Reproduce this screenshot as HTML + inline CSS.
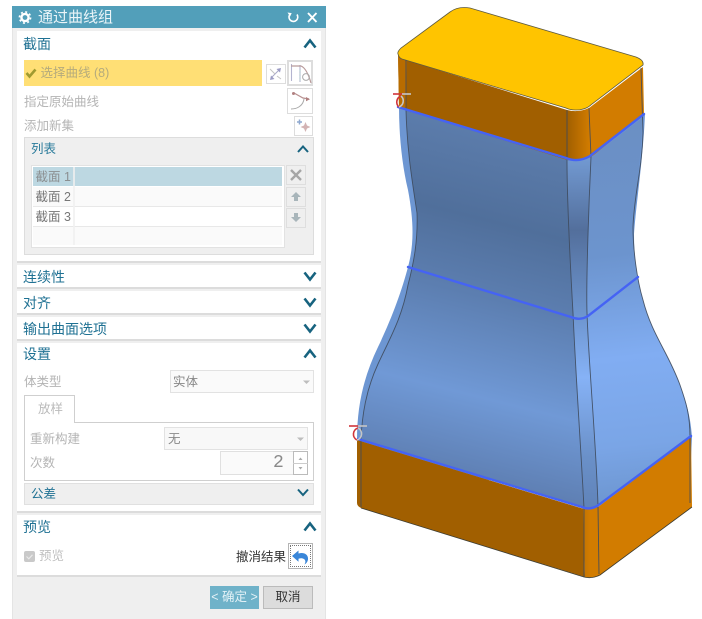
<!DOCTYPE html>
<html><head><meta charset="utf-8">
<style>
html,body{margin:0;padding:0;background:#fff}
#r{position:relative;width:702px;height:619px;overflow:hidden;background:#fff;font-family:"Liberation Sans","Noto Sans CJK SC",sans-serif;filter:blur(.3px)}
.a{position:absolute;box-sizing:border-box}
.t{position:absolute;white-space:nowrap;line-height:18px;height:18px}
.h{font-size:14px;color:#1f7193;left:23px}
.g{font-size:12.5px;color:#b4b4b4}
.d{font-size:12.5px;color:#777}
.w{background:#fff;left:17px;width:304px;border-bottom:2px solid #dcdcdc}
.b{background:#fff;border:1px solid #ddd}
svg{position:absolute;overflow:visible}
</style></head><body><div id="r">

<div class="a" style="left:12px;top:6px;width:314px;height:613px;background:#efefef;border-left:1px solid #e4e4e4;border-right:1px solid #e4e4e4"></div>
<div class="a" style="left:12px;top:6px;width:314px;height:22px;background:#529fba"></div>
<svg style="left:0;top:0" width="330" height="30" viewBox="0 0 330 30">
<circle cx="25" cy="17.5" r="3.6" fill="none" stroke="#fff" stroke-width="2.4"/>
<circle cx="25" cy="17.5" r="5.6" fill="none" stroke="#fff" stroke-width="1.6" stroke-dasharray="2 2.4"/>
<path d="M297 14.5A4.4 4.4 0 1 1 289.5 15" fill="none" stroke="#fff" stroke-width="1.6"/>
<path d="M287.5 12.5l4.2.6-1.6 3.4z" fill="#fff"/>
<path d="M308 13l8.500 9M316.500 13l-8.500 9" stroke="#fff" stroke-width="1.900"/>
</svg>
<div class="t" style="left:38px;top:9px;font-size:15px;color:#eaf4f8">通过曲线组</div>

<!-- Section 截面 -->
<div class="a w" style="top:31px;height:232px"></div>
<div class="t h" style="top:35px">截面</div>
<div class="a" style="left:24px;top:60px;width:238px;height:26px;background:#ffdf75"></div>
<svg style="left:0;top:0" width="40" height="90"><path d="M26.500 73l3 3.500 6-7" fill="none" stroke="#a09a30" stroke-width="2.600"/></svg>
<div class="t" style="left:40.500px;top:64px;font-size:12.500px;color:#b5ab7c">选择曲线 (8)</div>
<div class="a b" style="left:266px;top:64px;width:20px;height:20px"></div>
<div class="a b" style="left:287px;top:60px;width:26px;height:26px;border-width:2px"></div>
<div class="t g" style="left:24px;top:93px">指定原始曲线</div>
<div class="a b" style="left:287px;top:88px;width:26px;height:26px"></div>
<div class="t g" style="left:24px;top:117px">添加新集</div>
<div class="a b" style="left:294px;top:116px;width:19px;height:20px"></div>
<svg style="left:0;top:0" width="330" height="140">
<path d="M271 78l9-9" stroke="#a8a8c8" stroke-width="1"/><path d="M270 69l5 5M277 76l4 3" stroke="#c4c4c4" stroke-width="1"/>
<path d="M270 80l4.500-1-3.500-3.500zM281 68l-4.500 1 3.500 3.500z" fill="#9c9cc4"/>
<path d="M291.500 64v17M300 65v17" stroke="#b4b4d0" stroke-width="1.100" fill="none"/>
<path d="M300 70v12" stroke="#a9cfc9" stroke-width="1" stroke-dasharray="1.500 1.500"/>
<path d="M291 66h10C306 68 309 76 311 83" stroke="#b89a9a" stroke-width="1.200" fill="none"/>
<circle cx="306" cy="77" r="3.400" fill="none" stroke="#aaa"/>
<path d="M291 109c6 0 12-3 13-10" stroke="#aaa" stroke-width="1" fill="none"/>
<path d="M294 93l9 5 6 1" stroke="#b89090" stroke-width="1.200" fill="none"/>
<circle cx="293.500" cy="93.500" r="1.500" fill="#b08080"/><path d="M306 97l4 2.300-4 2z" fill="#b08080"/>
<path d="M297 122h5M299.500 119.500v5" stroke="#8ea8cf" stroke-width="1.500"/>
<path d="M305.500 122l1.500 3.500 3.500 1.500-3.500 1.500-1.500 3.500-1.500-3.500-3.500-1.500 3.500-1.500z" fill="#d3b3b3"/>
</svg>

<!-- List group -->
<div class="a" style="left:24px;top:137px;width:290px;height:118px;background:#efefef;border:1px solid #ddd"></div>
<div class="t" style="left:31px;top:140px;font-size:12.500px;color:#2a7b9b">列表</div>
<div class="a" style="left:31px;top:165px;width:254px;height:83px;background:#fff;border:1px solid #e2e2e2"></div>
<div class="a" style="left:33px;top:167px;width:249px;height:19px;background:#bdd8e2"></div>
<div class="a" style="left:33px;top:187px;width:249px;height:19px;background:#fafafa"></div>
<div class="a" style="left:33px;top:206px;width:249px;height:1px;background:#e8e8e8"></div>
<div class="a" style="left:33px;top:226px;width:249px;height:1px;background:#e8e8e8"></div>
<div class="a" style="left:33px;top:227px;width:249px;height:18px;background:#fafafa"></div>
<div class="a" style="left:73px;top:167px;width:2px;height:78px;background:rgba(240,240,240,.8)"></div>
<div class="t" style="left:35.500px;top:168px;font-size:12.500px;color:#8b8f91">截面 1</div>
<div class="t d" style="left:35.500px;top:188px">截面 2</div>
<div class="t d" style="left:35.500px;top:208px">截面 3</div>
<div class="a" style="left:286px;top:165px;width:20px;height:20px;background:#efefef;border:1px solid #dedede"></div>
<div class="a" style="left:286px;top:187px;width:20px;height:20px;background:#efefef;border:1px solid #dedede"></div>
<div class="a" style="left:286px;top:208px;width:20px;height:20px;background:#efefef;border:1px solid #dedede"></div>
<svg style="left:0;top:0" width="330" height="235">
<path d="M291 170l10 10M301 170l-10 10" stroke="#a6a6a6" stroke-width="2.400"/>
<path d="M296 192l5 5h-3v4h-4v-4h-3z" fill="#a8b5ba"/>
<path d="M294 213h4v4h3l-5 5-5-5h3z" fill="#a8b5ba"/>
</svg>

<!-- collapsed -->
<div class="a w" style="top:265px;height:24px"></div>
<div class="t h" style="top:268px">连续性</div>
<div class="a w" style="top:291px;height:24px"></div>
<div class="t h" style="top:294px">对齐</div>
<div class="a w" style="top:317px;height:24px"></div>
<div class="t h" style="top:320px">输出曲面选项</div>

<!-- 设置 -->
<div class="a w" style="top:343px;height:170px"></div>
<div class="t h" style="top:345px">设置</div>
<div class="t g" style="left:24px;top:373px">体类型</div>
<div class="a" style="left:170px;top:370px;width:144px;height:23px;background:#fafafa;border:1px solid #e2e2e2"></div>
<div class="t" style="left:173px;top:373px;font-size:12.500px;color:#888">实体</div>
<div class="a" style="left:24px;top:422px;width:290px;height:59px;border:1px solid #cfcfcf;background:#fff"></div>
<div class="a" style="left:24px;top:395px;width:51px;height:28px;border:1px solid #cfcfcf;border-bottom:0;background:#fff"></div>
<div class="t" style="left:38px;top:400px;font-size:12.500px;color:#bbb">放样</div>
<div class="t g" style="left:30px;top:430px">重新构建</div>
<div class="a" style="left:164px;top:427px;width:144px;height:23px;background:#f8f8f8;border:1px solid #e2e2e2"></div>
<div class="t" style="left:168px;top:430px;font-size:12.500px;color:#888">无</div>
<div class="t g" style="left:30px;top:454px">次数</div>
<div class="a" style="left:220px;top:451px;width:74px;height:24px;background:#fafafa;border:1px solid #e0e0e0"></div>
<div class="t" style="left:273px;top:453px;font-size:18px;line-height:20px;height:20px;color:#8a8a8a;font-family:'Liberation Mono',monospace">2</div>
<div class="a" style="left:293px;top:451px;width:15px;height:24px;background:#fff;border:1px solid #bbb"></div>
<div class="a" style="left:293px;top:463px;width:15px;height:1px;background:#ccc"></div>
<div class="a" style="left:24px;top:483px;width:290px;height:22px;background:#efefef;border:1px solid #e0e0e0"></div>
<div class="t" style="left:31px;top:485px;font-size:12.500px;color:#1f7193">公差</div>
<svg style="left:0;top:0" width="330" height="500">
<path d="M303 380.500h7l-3.500 3.500z" fill="#bdbdbd"/>
<path d="M297 437.500h7l-3.500 3.500z" fill="#bdbdbd"/>
<path d="M298.500 460l2-2.500 2 2.500z" fill="#aaa"/><path d="M298.500 467l2 2.500 2-2.500z" fill="#aaa"/>
</svg>

<!-- 预览 -->
<div class="a w" style="top:515px;height:62px"></div>
<div class="t h" style="top:518px">预览</div>
<div class="a" style="left:24px;top:551px;width:11px;height:11px;background:#c9c9c9;border-radius:2px"></div>
<div class="t" style="left:39px;top:547px;font-size:12.500px;color:#c0c0c0">预览</div>
<div class="t" style="left:236px;top:548px;font-size:12.500px;color:#333">撤消结果</div>
<div class="a" style="left:288px;top:543px;width:25px;height:26px;background:#fff;border:1px solid #b5b5b5"></div>
<div class="a" style="left:290px;top:545px;width:21px;height:22px;border:1px dotted #777"></div>
<svg style="left:0;top:0" width="330" height="570">
<path d="M292 556l6.500-5.500v3c5-1.500 9 .500 9.500 4.500.300 3-1.500 5.500-3.500 6.500 1-2 1.500-4-.500-5.500-1.500-1-3.500-1-5.500-.3v3z" fill="#3a86d8"/>
<path d="M26.500 556.500l2.300 2.300 3.700-4" fill="none" stroke="#e8e8e8" stroke-width="1.200"/>
</svg>

<div class="a" style="left:210px;top:586px;width:49px;height:23px;background:#6fb2c9;color:#e3f1f6;font-size:12.500px;line-height:23px;text-align:center;white-space:nowrap">&lt; 确定 &gt;</div>
<div class="a" style="left:263px;top:586px;width:50px;height:23px;background:#dcdcdc;border:1px solid #bbb;color:#333;font-size:12.500px;line-height:21px;text-align:center">取消</div>

<!-- chevrons -->
<svg style="left:0;top:0" width="330" height="540">
<g fill="none" stroke="#17637f" stroke-width="2.600">
<path d="M304.500 47.500l5.500-7 5.500 7M304.500 357.500l5.500-7 5.500 7M304.500 530.500l5.500-7 5.500 7"/>
<path d="M304.500 272.500l5.500 7 5.500-7M304.500 298.500l5.500 7 5.500-7M304.500 324.500l5.500 7 5.500-7"/>
</g>
<g fill="none" stroke="#17637f" stroke-width="2">
<path d="M298 152l5-5.500 5 5.500"/>
<path d="M298 489.500l5 5.500 5-5.500"/>
</g>
</svg>

<!-- 3D model -->
<svg style="left:0;top:0" width="702" height="619" viewBox="0 0 702 619">
<defs>
<linearGradient id="f" gradientUnits="userSpaceOnUse" x1="505" y1="110" x2="405" y2="510">
<stop offset="0" stop-color="#5f80b0"/><stop offset=".27" stop-color="#506f9b"/><stop offset=".45" stop-color="#5c7eb0"/>
<stop offset=".69" stop-color="#7099d6"/><stop offset=".88" stop-color="#5f80b4"/><stop offset="1" stop-color="#5a76a4"/>
</linearGradient>
<linearGradient id="s" gradientUnits="userSpaceOnUse" x1="610" y1="120" x2="650" y2="500">
<stop offset="0" stop-color="#6b8fc3"/><stop offset=".35" stop-color="#6c94ce"/><stop offset=".62" stop-color="#81adf2"/><stop offset=".85" stop-color="#7aa5e6"/><stop offset="1" stop-color="#6d96d0"/>
</linearGradient>
<linearGradient id="c" gradientUnits="userSpaceOnUse" x1="0" y1="160" x2="0" y2="510">
<stop offset="0" stop-color="#7198d0"/><stop offset=".2" stop-color="#536f9c"/><stop offset=".45" stop-color="#6e96d0"/><stop offset=".62" stop-color="#86b2f6"/><stop offset=".85" stop-color="#6a90c8"/><stop offset="1" stop-color="#5f82b8"/>
</linearGradient>
<linearGradient id="ob" gradientUnits="userSpaceOnUse" x1="567" y1="0" x2="590" y2="0">
<stop offset="0" stop-color="#a15f00"/><stop offset="1" stop-color="#d27c00"/>
</linearGradient>
</defs>

<!-- body silhouette base -->
<path d="M399 107C399 135 402 165 408 190C414 222 414 245 408 267C402 290 392 318 378 347C364 376 357 405 357 440L357 480L690 480L692 437C690 408 682 388 670 366C660 348 652 330 645 310C638 290 634 262 634 234C636 205 643 160 645 114L590 150Z" fill="#6d96d2"/>
<!-- front face -->
<path d="M406 110L567 160C567 200 570 260 573 313C576 380 581 450 584 508L362 440C362 415 366 390 378 364C390 338 402 318 408 285C414 262 418 240 417 213C412 180 407 150 406 110Z" fill="url(#f)"/>
<!-- right face -->
<path d="M591 157L642 118C642 150 636 190 633 227C633 250 637 280 643 300C652 335 668 352 680 385C686 402 690 415 690 437L598 506C596 440 589 370 587 313C586 280 589 200 591 157Z" fill="url(#s)"/>
<!-- corner -->
<path d="M567 160Q578 163 591 157C589 200 586 280 587 313C589 370 596 440 598 506Q590 510 584 508C581 450 576 380 573 313C570 260 567 200 567 160Z" fill="url(#c)"/>

<!-- lower band -->
<path d="M357 440L584 509L585 577L361 508Q357 506 357 503Z" fill="#a15f00"/>
<path d="M598 507L691 437L692 507L604 572Q600 576 598 576Z" fill="#d27c00"/>
<path d="M583 508Q590 510 598 506L599 576Q592 578 585 577Z" fill="url(#ob)"/>
<!-- upper band -->
<path d="M398 52L406 60L567 110L567 160L406 110L399 107Z" fill="#a15f00"/>
<path d="M398 52L407 60L406 110L399 107Z" fill="#b86c00"/>
<path d="M589 108L643 67L644 114L600 150Q592 157 590 157Z" fill="#d27c00"/>
<path d="M567 110Q578 113 589 108L591 157Q578 162 567 160Z" fill="url(#ob)"/>
<!-- top face -->
<path d="M398 54Q397 52 401 48L450 12Q458 6 470 8L636 57Q644 60 643 65L592 104Q586 110 576 110Q570 110 566 108L402 59Q399 58 398 54Z" fill="#ffc400" stroke="#5e5a40" stroke-width=".8"/>

<!-- edges -->
<g fill="none" stroke="#3e4a5c" stroke-width=".9" opacity=".9">
<path d="M406 60L406 110C407 150 412 180 417 213C418 240 414 262 408 285C402 318 390 338 378 364C366 390 362 415 361 440L361 507"/>
<path d="M567 110L567 160C567 200 570 260 573 313C576 380 581 450 584 508L584 577"/>
<path d="M589 108L591 157C589 200 586 280 587 313C589 370 596 440 598 506L599 574"/>
<path d="M641 68L643 133C642 170 634 195 633 227C633 250 637 280 643 300C652 335 668 352 680 385C686 402 690 415 690 437L690 503"/>
</g>
<path d="M361 508L584 577Q592 579 600 575L692 507" fill="none" stroke="#3a3a30" stroke-width=".8"/>

<!-- blue lines -->
<g fill="none" stroke="#4563f4" stroke-width="2.400" stroke-linecap="round">
<path d="M398 107L566 158Q578 163 590 156L644 114"/>
<path d="M408 267L571 317Q580 321 588 316L638 277"/>
<path d="M358 439L582 507Q591 511 600 504L691 436"/>
</g>

<!-- markers -->
<g fill="none" stroke-width="1.600">
<path d="M393 94H404" stroke="#d0343a"/><path d="M402 94H411" stroke="#c6c6c6"/>
<path d="M401 96A6.500 6.500 0 0 0 399 107" stroke="#d0343a"/>
<path d="M401 96A6.500 6.500 0 0 1 399 107" stroke="#c6c6c6"/>
<path d="M349 426H359" stroke="#d0343a"/><path d="M358 426H367" stroke="#c6c6c6"/>
<path d="M358 428A6.500 6.500 0 0 0 357 440" stroke="#d0343a"/>
<path d="M358 428A6.500 6.500 0 0 1 357 440" stroke="#c6c6c6"/>
</g>
</svg>
</div></body></html>
